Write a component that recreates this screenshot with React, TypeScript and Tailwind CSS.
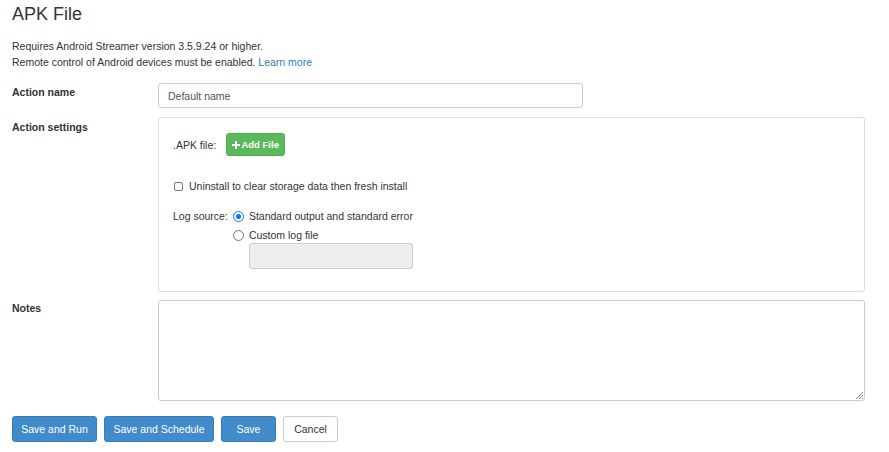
import React from "react";

export default function App() {
  return (
    <div className="w-[889px] h-[452px] bg-white text-[#333] text-[10.5px] leading-[16px] overflow-hidden" style={{ fontFamily: '"Liberation Sans", Arial, sans-serif' }}>
      <div className="pl-[12px] pr-[24px]">
        <h1 className="text-[18px] leading-[20px] pt-[4px] text-[#333] font-normal">APK File</h1>
        <div className="mt-[14px]">
          <div>Requires Android Streamer version 3.5.9.24 or higher.</div>
          <div>
            Remote control of Android devices must be enabled.{" "}
            <a className="text-[#337ab7]" href="#">Learn more</a>
          </div>
        </div>

        <div className="flex mt-[13px]">
          <div className="w-[146px] font-bold pt-[1px]">Action name</div>
          <input
            className="w-[425px] h-[25px] border border-[#ccc] rounded-[3px] px-[9px] text-[10.5px] text-[#555] outline-none"
            defaultValue="Default name"
          />
        </div>

        <div className="flex mt-[9px]">
          <div className="w-[146px] font-bold pt-[2px]">Action settings</div>
          <div className="flex-1 h-[175px] border border-[#ddd] rounded-[3px] pl-[14px] pt-[15px]">
            <div className="flex items-center">
              <span className="mr-[10px]">.APK file:</span>
              <button className="h-[23px] w-[59px] justify-center bg-[#5cb85c] border border-[#4cae4c] rounded-[3px] text-white text-[9.5px] font-bold flex items-center">
                <svg width="8" height="8" viewBox="0 0 8 8" className="mr-[1px]">
                  <path d="M3 0h2v3h3v2H5v3H3V5H0V3h3z" fill="white" />
                </svg>
                Add File
              </button>
            </div>
            <label className="flex items-center mt-[22px]">
              <span className="w-[9px] h-[9px] border border-[#767676] rounded-[2px] bg-white ml-[1px] mr-[6px]" />
              Uninstall to clear storage data then fresh install
            </label>
            <div className="flex mt-[14px]">
              <span className="mr-[5px]">Log source:</span>
              <div>
                <div className="flex items-center">
                  <span className="w-[11px] h-[11px] rounded-full border border-[#0075ff] flex items-center justify-center mr-[5px]">
                    <span className="w-[5px] h-[5px] rounded-full bg-[#0075ff]" />
                  </span>
                  Standard output and standard error
                </div>
                <div className="flex items-center mt-[3px]">
                  <span className="w-[11px] h-[11px] rounded-full border border-[#767676] mr-[5px]" />
                  Custom log file
                </div>
                <div className="ml-[16px] mt-[0px] w-[164px] h-[26px] bg-[#eee] border border-[#ccc] rounded-[3px]" />
              </div>
            </div>
          </div>
        </div>

        <div className="flex mt-[8px]">
          <div className="w-[146px] font-bold">Notes</div>
          <div className="relative flex-1 h-[101px] border border-[#ccc] rounded-[3px]">
            <svg width="8" height="8" viewBox="0 0 8 8" className="absolute right-[1px] bottom-[1px]">
              <path d="M8 1L1 8M8 4L4 8M8 7L7 8" stroke="#888" strokeWidth="1" />
            </svg>
          </div>
        </div>

        <div className="flex gap-[7px] mt-[15px]">
          <button className="h-[26px] w-[85px] bg-[#428bca] border border-[#357ebd] rounded-[3px] text-white text-[10.5px]">Save and Run</button>
          <button className="h-[26px] w-[110px] bg-[#428bca] border border-[#357ebd] rounded-[3px] text-white text-[10.5px]">Save and Schedule</button>
          <button className="h-[26px] w-[55px] bg-[#428bca] border border-[#357ebd] rounded-[3px] text-white text-[10.5px]">Save</button>
          <button className="h-[26px] w-[55px] bg-white border border-[#ccc] rounded-[3px] text-[#333] text-[10.5px]">Cancel</button>
        </div>
      </div>
    </div>
  );
}
